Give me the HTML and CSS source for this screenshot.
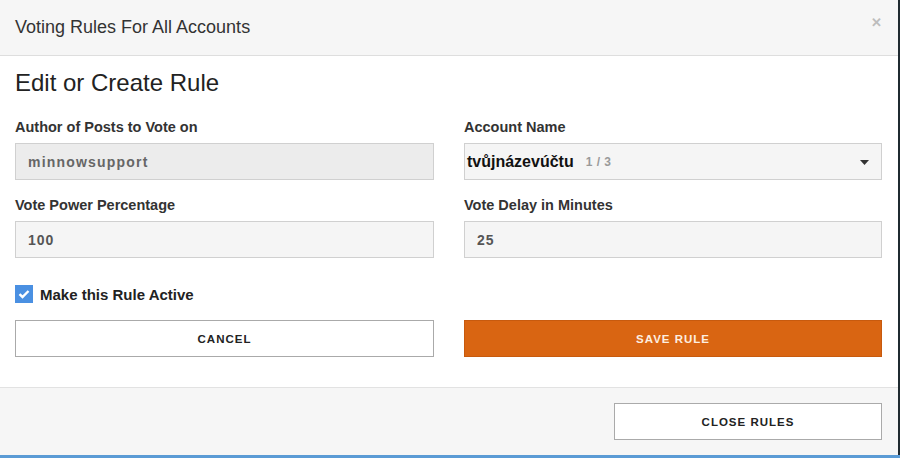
FILE: index.html
```html
<!DOCTYPE html>
<html>
<head>
<meta charset="utf-8">
<link rel="stylesheet" href="styles.css">
</head>
<body>
<div class="page">
  <div class="modal">
    <div class="modal-header">
      <div class="modal-title">Voting Rules For All Accounts</div>
      <div class="close-x">&#x2715;</div>
    </div>
    <div class="modal-body">
      <h2 class="section-title">Edit or Create Rule</h2>
      <div class="grid">
        <div class="field">
          <div class="label">Author of Posts to Vote on</div>
          <div class="input disabled">minnowsupport</div>
        </div>
        <div class="field">
          <div class="label">Account Name</div>
          <div class="input select">
            <span class="acct">tvůjnázevúčtu</span>
            <span class="count">1 / 3</span>
            <svg class="caret" width="9" height="5" viewBox="0 0 9 5"><path d="M0 0h9L4.5 5z" fill="#333"/></svg>
          </div>
        </div>
        <div class="field">
          <div class="label">Vote Power Percentage</div>
          <div class="input">100</div>
        </div>
        <div class="field">
          <div class="label">Vote Delay in Minutes</div>
          <div class="input">25</div>
        </div>
      </div>
      <div class="check-row">
        <span class="checkbox">
          <svg width="12" height="10" viewBox="0 0 12 10"><path d="M1.5 5.2 4.5 8 10.5 2" fill="none" stroke="#fff" stroke-width="2.4"/></svg>
        </span>
        <span class="check-label">Make this Rule Active</span>
      </div>
      <div class="grid buttons">
        <div class="btn btn-outline">CANCEL</div>
        <div class="btn btn-primary">SAVE RULE</div>
      </div>
    </div>
    <div class="modal-footer">
      <div class="btn btn-outline btn-close">CLOSE RULES</div>
    </div>
  </div>
</div>
</body>
</html>
```
FILE: styles.css
```css
* { box-sizing: border-box; }
html, body { margin: 0; padding: 0; }
body {
  background: #1f2a30;
  font-family: "Liberation Sans", Arial, sans-serif;
  color: #333;
  width: 900px;
  height: 458px;
  overflow: hidden;
}
.page {
  height: 458px;
  border-bottom: 3px solid #5b9bd5;
}
.modal {
  width: 898px;
  height: 455px;
  background: #fff;
  display: flex;
  flex-direction: column;
}
.modal-header {
  height: 56px;
  background: #f6f6f6;
  border-bottom: 1px solid #dedede;
  display: flex;
  align-items: center;
  justify-content: space-between;
  padding: 0 16px 0 15px;
}
.modal-title {
  font-size: 18px;
  color: #333;
}
.close-x {
  font-size: 13px;
  font-weight: bold;
  color: #bdbdbd;
  margin-top: -10px;
}
.modal-body {
  padding: 13px 15px 0 15px;
  flex: 1;
}
.section-title {
  margin: 0 0 22px 0;
  font-size: 24px;
  line-height: 28px;
  font-weight: normal;
  color: #222;
}
.grid {
  display: grid;
  grid-template-columns: 419px 418px;
  column-gap: 30px;
  row-gap: 17px;
}
.label {
  font-size: 14.5px;
  font-weight: bold;
  line-height: 17px;
  color: #333;
  margin-bottom: 7px;
}
.input {
  height: 37px;
  border: 1px solid #d0d0d0;
  background: #f5f5f5;
  padding: 0 12px;
  display: flex;
  align-items: center;
  font-size: 14px;
  font-weight: bold;
  letter-spacing: 1px;
  color: #555;
}
.input.disabled {
  background: #ececec;
  color: #666;
  letter-spacing: 1.2px;
}
.input.select {
  padding: 0 12px 0 2px;
  letter-spacing: 0;
}
.acct {
  font-size: 16px;
  color: #111;
}
.count {
  font-size: 12px;
  color: #9a9a9a;
  margin-left: 12px;
  letter-spacing: 0.5px;
}
.caret {
  margin-left: auto;
  margin-top: 1px;
}
.check-row {
  display: flex;
  align-items: center;
  margin-top: 27px;
  height: 18px;
}
.checkbox {
  width: 18px;
  height: 18px;
  background: #4a90e2;
  display: flex;
  align-items: center;
  justify-content: center;
  margin-right: 7px;
}
.check-label {
  font-size: 15px;
  font-weight: bold;
  color: #222;
}
.buttons {
  margin-top: 17px;
}
.btn {
  height: 37px;
  display: flex;
  align-items: center;
  justify-content: center;
  font-size: 11.5px;
  font-weight: bold;
  letter-spacing: 1px;
}
.btn-outline {
  background: #fff;
  border: 1px solid #aaa;
  color: #222;
}
.btn-primary {
  background: #d96512;
  border: 1px solid #c75a0e;
  color: #fdeee0;
}
.modal-footer {
  height: 68px;
  background: #f6f6f6;
  border-top: 1px solid #e2e2e2;
  display: flex;
  justify-content: flex-end;
  padding: 15px 16px 0 0;
}
.btn-close {
  width: 268px;
}
```
